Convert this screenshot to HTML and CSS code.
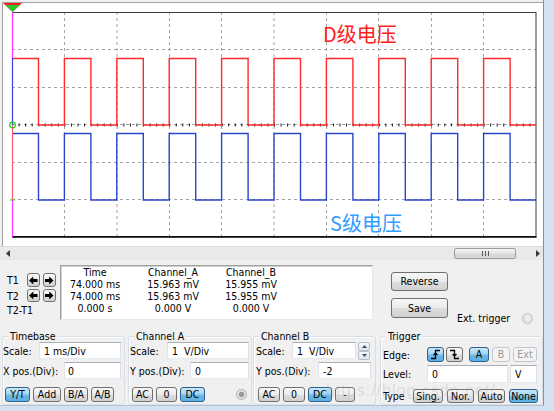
FILE: index.html
```html
<!DOCTYPE html>
<html>
<head>
<meta charset="utf-8">
<link rel="stylesheet" href="styles.css">
</head>
<body>
<div class="app">
  <div class="screen">
    <svg class="plot" width="540" height="243" viewBox="3 3 540 243">
      <g class="grid">
        <line x1="64.5" y1="12" x2="64.5" y2="237"/>
        <line x1="117" y1="12" x2="117" y2="237"/>
        <line x1="169.5" y1="12" x2="169.5" y2="237"/>
        <line x1="221.5" y1="12" x2="221.5" y2="237"/>
        <line x1="274" y1="12" x2="274" y2="237"/>
        <line x1="326.5" y1="12" x2="326.5" y2="237"/>
        <line x1="378.5" y1="12" x2="378.5" y2="237"/>
        <line x1="431.5" y1="12" x2="431.5" y2="237"/>
        <line x1="483.5" y1="12" x2="483.5" y2="237"/>
        <line x1="12" y1="49.5" x2="536" y2="49.5"/>
        <line x1="12" y1="87.5" x2="536" y2="87.5"/>
        <line x1="12" y1="124.5" x2="536" y2="124.5"/>
        <line x1="12" y1="162.5" x2="536" y2="162.5"/>
        <line x1="12" y1="199.5" x2="536" y2="199.5"/>
      </g>
      <line class="ticks" x1="12" y1="125" x2="536" y2="125"/>
      <rect class="frame" x="12.5" y="12.5" width="523.5" height="224"/>
      <line class="bottom" x1="12" y1="237" x2="536.5" y2="237"/>
      <path class="wave-a" d="M12.5 58.5H38.5V125H64.4V58.5H90.9V125H116.8V58.5H143.3V125H169.2V58.5H195.7V125H221.6V58.5H248.1V125H274V58.5H300.5V125H326.4V58.5H352.9V125H378.8V58.5H405.3V125H431.2V58.5H457.7V125H483.6V58.5H510.1V125H536"/>
      <path class="wave-b" d="M12.5 133.5H38.5V200H64.4V133.5H90.9V200H116.8V133.5H143.3V200H169.2V133.5H195.7V200H221.6V133.5H248.1V200H274V133.5H300.5V200H326.4V133.5H352.9V200H378.8V133.5H405.3V200H431.2V133.5H457.7V200H483.6V133.5H510.1V200H536"/>
      <line class="cur-m" x1="12.5" y1="12" x2="12.5" y2="58"/>
      <line class="cur-b" x1="12.5" y1="58" x2="12.5" y2="125"/>
      <line class="cur-r" x1="12.5" y1="125" x2="12.5" y2="200"/>
      <line class="cur-m" x1="12.5" y1="200" x2="12.5" y2="237"/>
      <circle class="gnd" cx="12.5" cy="125" r="2.8"/>
      <line class="gnd-b" x1="10" y1="200" x2="15" y2="200"/>
      <polygon class="mk-r" points="3,3 22,3 12.5,12"/>
      <polygon class="mk-g" points="5.5,5 19.5,5 12.5,12"/>
      <text class="lbl-d" x="323" y="42">D级电压</text>
      <text class="lbl-s" x="330" y="231">S级电压</text>
    </svg>
  </div>

  <div class="hscroll">
    <svg class="sarrow" width="4" height="7" viewBox="0 0 4 7"><polygon points="0,3.5 4,0 4,7"/></svg>
    <div class="thumb">
      <svg width="7" height="5" viewBox="0 0 7 5"><path d="M0.5 0V5M3.5 0V5M6.5 0V5"/></svg>
    </div>
    <svg class="sarrow" width="4" height="7" viewBox="0 0 4 7"><polygon points="0,0 4,3.5 0,7"/></svg>
  </div>

  <div class="readout">
    <div class="cursors">
      <span class="tl">T1</span>
      <span class="ab"><svg width="9" height="9" viewBox="0 0 9 9"><polygon points="0,4.5 4.3,0.5 4.3,3 8.5,3 8.5,6 4.3,6 4.3,8.5"/></svg></span>
      <span class="ab"><svg width="9" height="9" viewBox="0 0 9 9"><polygon points="8.5,4.5 4.2,0.5 4.2,3 0,3 0,6 4.2,6 4.2,8.5"/></svg></span>
      <span class="tl">T2</span>
      <span class="ab"><svg width="9" height="9" viewBox="0 0 9 9"><polygon points="0,4.5 4.3,0.5 4.3,3 8.5,3 8.5,6 4.3,6 4.3,8.5"/></svg></span>
      <span class="ab"><svg width="9" height="9" viewBox="0 0 9 9"><polygon points="8.5,4.5 4.2,0.5 4.2,3 0,3 0,6 4.2,6 4.2,8.5"/></svg></span>
      <span class="tl t21">T2-T1</span>
    </div>
    <div class="data">
      <div class="dgrid">
        <span>Time</span><span>Channel_A</span><span>Channel_B</span>
        <span>74.000 ms</span><span>15.963 mV</span><span>15.955 mV</span>
        <span>74.000 ms</span><span>15.963 mV</span><span>15.955 mV</span>
        <span>0.000 s</span><span>0.000 V</span><span>0.000 V</span>
      </div>
    </div>
    <div class="actions">
      <span class="btn big">Reverse</span>
      <span class="btn big save">Save</span>
    </div>
    <div class="ext">
      <span class="ext-text">Ext. trigger</span>
      <span class="radio"></span>
    </div>
  </div>

  <div class="controls">
    <div class="group g-time">
      <div class="legend">Timebase</div>
      <div class="row">
        <span>Scale:</span><span class="inp w82">1 ms/Div</span>
      </div>
      <div class="row r2">
        <span>X pos.(Div):</span><span class="inp w57">0</span>
      </div>
      <div class="btns">
        <span class="btn on w25">Y/T</span>
        <span class="btn w28">Add</span>
        <span class="btn w24">B/A</span>
        <span class="btn w23">A/B</span>
      </div>
    </div>

    <div class="group g-a">
      <div class="legend">Channel A</div>
      <div class="row">
        <span>Scale:</span><span class="inp w82">1&nbsp; V/Div</span>
      </div>
      <div class="row r2">
        <span>Y pos.(Div):</span><span class="inp w59">0</span>
      </div>
      <div class="btns">
        <span class="btn w21">AC</span>
        <span class="btn w21">0</span>
        <span class="btn on w25">DC</span>
        <span class="radio dot"></span>
      </div>
    </div>

    <div class="group g-b">
      <div class="legend">Channel B</div>
      <div class="row">
        <span>Scale:</span>
        <span class="combo">
          <span class="inp w64">1&nbsp; V/Div</span>
          <span class="spin">
            <span class="sp"><svg width="5" height="3" viewBox="0 0 5 3"><polygon points="0,3 2.5,0 5,3"/></svg></span>
            <span class="sp"><svg width="5" height="3" viewBox="0 0 5 3"><polygon points="0,0 2.5,3 5,0"/></svg></span>
          </span>
        </span>
      </div>
      <div class="row r2 rb2">
        <span>Y pos.(Div):</span><span class="inp w53">-2</span>
      </div>
      <div class="btns">
        <span class="btn w22">AC</span>
        <span class="btn w22">0</span>
        <span class="btn on w24">DC</span>
        <span class="btn w20">-</span>
      </div>
    </div>

    <div class="group g-trig">
      <div class="legend">Trigger</div>
      <div class="trow edge">
        <span class="tlab">Edge:</span>
        <span class="btn on w17"><svg width="11" height="11" viewBox="0 0 11 11"><path d="M1 9.5H5.5V1.5H10M3.5 6L5.5 4L7.5 6"/></svg></span>
        <span class="btn w17 ml2"><svg width="11" height="11" viewBox="0 0 11 11"><path d="M1 1.5H5.5V9.5H10M3.5 5L5.5 7L7.5 5"/></svg></span>
        <span class="btn on w20 ml6">A</span>
        <span class="btn off w18 ml3">B</span>
        <span class="btn off w24 ml3">Ext</span>
      </div>
      <div class="trow level">
        <span class="tlab">Level:</span>
        <span class="inp w81">0</span>
        <span class="inp unit">V</span>
      </div>
      <div class="trow type">
        <span class="tlab t30">Type</span>
        <span class="btn w30">Sing.</span>
        <span class="btn w27 ml4">Nor.</span>
        <span class="btn w27 ml4">Auto</span>
        <span class="btn on w29 ml4">None</span>
      </div>
    </div>
  </div>
  <div class="watermark">https://blog.csdn.net/</div>
</div>
</body>
</html>
```

FILE: styles.css
```css
* { box-sizing: border-box; }

body {
  margin: 0;
  width: 554px;
  height: 411px;
  overflow: hidden;
  background: #d3e1f1;
  font-family: "DejaVu Sans Condensed", "Liberation Sans", sans-serif;
  font-size: 10.5px;
  color: #000;
}

.app {
  position: relative;
  width: 544px;
  height: 406px;
  padding-top: 2px;
  background: #f0f0f0;
  border-right: 1px solid #8e8f8f;
  border-bottom: 1px solid #b7c3cf;
}

/* ---------- scope screen ---------- */
.screen {
  width: 541px;
  height: 244px;
  margin-left: 2px;
  background: #fff;
  border-left: 1px solid #a0a0a0;
  border-top: 1px solid #a0a0a0;
}

.plot { display: block; }

.grid line {
  stroke: #a4a4a4;
  stroke-width: 1;
  stroke-dasharray: 3 3;
}

.ticks {
  stroke: #1a1a1a;
  stroke-width: 3;
  stroke-dasharray: 1 5.55;
}

.frame { fill: none; stroke: #3c3c3c; stroke-width: 1; }
.bottom { stroke: #000; stroke-width: 1.5; }

.wave-a { fill: none; stroke: #ff2a2a; stroke-width: 1.4; }
.wave-b { fill: none; stroke: #2a46c8; stroke-width: 1.4; }

.cur-m { stroke: #ff33ff; stroke-width: 1.2; }
.cur-b { stroke: #3344dd; stroke-width: 1.2; }
.cur-r { stroke: #ff5a6a; stroke-width: 1.2; }

.gnd { fill: none; stroke: #22cc22; stroke-width: 1.2; }
.gnd-b { stroke: #22cc22; stroke-width: 1; }

.mk-r { fill: #ee2020; }
.mk-g { fill: #28c828; }

.lbl-d, .lbl-s {
  font-family: "Noto Sans CJK SC", "Noto Sans", sans-serif;
  font-size: 20px;
}
.lbl-d { fill: #ff2020; }
.lbl-s { fill: #2f9cff; }

/* ---------- horizontal scrollbar ---------- */
.hscroll {
  display: flex;
  align-items: center;
  height: 14px;
  padding: 0 3px 0 6px;
  background: #e9e9e9;
  border-top: 1px solid #dadada;
}

.sarrow polygon { fill: #3a3a3a; }

.thumb {
  display: flex;
  align-items: center;
  justify-content: center;
  width: 62px;
  height: 11px;
  margin-left: auto;
  margin-right: 20px;
  border: 1px solid #9c9c9c;
  border-radius: 2px;
  background: linear-gradient(#f6f6f6, #e4e4e4 50%, #d6d6d6 51%, #dadada);
}
.thumb path { stroke: #555; stroke-width: 1; }

/* ---------- readout row ---------- */
.readout {
  display: flex;
  height: 65px;
  padding-left: 7px;
}

.cursors {
  flex: none;
  display: grid;
  grid-template-columns: 17px 13px 13px;
  grid-template-rows: 14px 13px 12px;
  column-gap: 3px;
  row-gap: 2px;
  align-content: start;
  margin-top: 13px;
}

.tl {
  line-height: 12px;
  align-self: center;
}
.t21 { grid-column: 1 / 4; align-self: end; }

.ab {
  display: flex;
  align-items: center;
  justify-content: center;
  border: 1px solid #707070;
  border-radius: 3px;
  background: linear-gradient(#f7f7f7, #e9e9e9 50%, #dcdcdc 51%, #d4d4d4);
}
.ab polygon { fill: #000; }

.data {
  flex: none;
  width: 313px;
  height: 55px;
  margin: 5px 0 0 4px;
  background: #fff;
  border: 1px solid;
  border-color: #a0a0a0 #e8e8e8 #e8e8e8 #a0a0a0;
  box-shadow: inset 1px 1px 0 #d0d0d0;
}

.dgrid {
  display: grid;
  grid-template-columns: 68px 88px 68px;
  line-height: 12px;
  text-align: center;
  white-space: nowrap;
}

.actions {
  flex: none;
  display: flex;
  flex-direction: column;
  gap: 7px;
  margin: 12px 0 0 18px;
}

.btn {
  display: flex;
  align-items: center;
  justify-content: center;
  height: 15px;
  border: 1px solid #707070;
  border-radius: 3px;
  background: linear-gradient(#f6f6f6, #ebebeb 50%, #dddddd 51%, #d1d1d1);
  line-height: 1;
  white-space: nowrap;
}
.btn path { fill: none; stroke: #000; stroke-width: 1.3; }

.btn.big { width: 57px; height: 19px; }
.btn.save { height: 20px; }

.btn.on {
  border-color: #2c628b;
  background: linear-gradient(#c7e6f8, #a5d6f3 45%, #6db9e8 55%, #5eafe3);
}

.btn.off {
  border-color: #c4c8cc;
  background: #f4f4f4;
  color: #9a9a9a;
}

.ext {
  flex: none;
  display: flex;
  align-items: center;
  height: 12px;
  margin: 52px 0 0 9px;
}

.ext-text {
  width: 65px;
  white-space: nowrap;
  line-height: 12px;
}

.radio {
  flex: none;
  width: 11px;
  height: 11px;
  border-radius: 50%;
  border: 1px solid #c2c2c2;
  background: radial-gradient(circle at 50% 45%, #f2f2f2, #d9d9d9);
}
.radio.dot {
  margin-left: 28px;
  align-self: center;
  border-color: #b0b0b0;
  background: radial-gradient(circle, #9a9a9a 0 2.5px, #e8e8e8 3.2px, #d6d6d6);
}

/* ---------- control groups ---------- */
.controls {
  display: flex;
  height: 80px;
  padding: 11px 0 0 2px;
}

.group {
  flex: none;
  display: flex;
  flex-direction: column;
  height: 69px;
  border: 1px solid #d5dfe5;
  border-radius: 3px;
  box-shadow: inset 1px 1px 0 #fff;
}

.g-time { width: 123px; margin-right: 3px; }
.g-a { width: 124px; margin-right: 1px; }
.g-b { width: 123px; margin-right: 4px; }
.g-trig { width: 163px; }

.legend {
  align-self: flex-start;
  height: 12px;
  margin: -7px 0 0 5px;
  padding: 0 2px;
  line-height: 12px;
  background: #f0f0f0;
}

.row {
  display: flex;
  align-items: center;
  justify-content: space-between;
  height: 17px;
  white-space: nowrap;
}
.r2 { margin-top: 3px; }

.g-time .row { padding: 0 3px 0 0; }
.g-a .row { padding: 0 2px 0 1px; }
.g-b .row { padding: 0 5px 0 2px; }
.g-b .rb2 { padding-right: 4px; }

.inp {
  display: flex;
  align-items: center;
  height: 17px;
  padding-left: 4px;
  background: #fff;
  border: 1px solid;
  border-color: #abadb3 #dbdfe6 #e3e9ef #e2e3ea;
  white-space: nowrap;
}

.w82 { width: 82px; }
.w57 { width: 57px; padding-left: 3px; }
.w59 { width: 59px; }
.w64 { width: 64px; }
.w53 { width: 53px; }
.w81 { width: 81px; }

.combo { display: flex; align-items: center; gap: 2px; }

.spin {
  display: flex;
  flex-direction: column;
  width: 12px;
  height: 18px;
}
.sp {
  flex: 1;
  display: flex;
  align-items: center;
  justify-content: center;
  border: 1px solid #b7c0c9;
  border-radius: 2px;
  background: linear-gradient(#f4f8fb, #dbe6ef);
}
.sp polygon { fill: #3b4a5a; }

.btns {
  display: flex;
  align-items: center;
  gap: 3px;
  margin-top: 8px;
}
.g-time .btns { padding-left: 2px; }
.g-a .btns { padding-left: 3px; }
.g-b .btns { padding-left: 4px; }

.w17 { width: 17px; }
.w18 { width: 18px; }
.w20 { width: 20px; }
.w21 { width: 21px; }
.w22 { width: 22px; }
.w23 { width: 23px; }
.w24 { width: 24px; }
.w25 { width: 25px; }
.w27 { width: 27px; }
.w28 { width: 28px; }
.w29 { width: 29px; }
.w30 { width: 30px; }

.ml2 { margin-left: 2px; }
.ml3 { margin-left: 3px; }
.ml4 { margin-left: 4px; }
.ml6 { margin-left: 6px; }

.trow {
  display: flex;
  align-items: center;
  padding-left: 2px;
}
.edge { height: 15px; margin-top: 5px; }
.level { height: 18px; margin-top: 3px; }
.level .inp { height: 18px; }
.type { height: 14px; margin-top: 6px; }
.type .btn { height: 14px; }

.tlab { width: 44px; }
.tlab.t30 { width: 30px; }

.unit { width: 27px; margin-left: 2px; }

.watermark {
  position: absolute;
  left: 326px;
  top: 382px;
  font-family: "Liberation Sans", sans-serif;
  font-size: 16px;
  letter-spacing: 1px;
  color: rgba(170, 170, 170, 0.3);
  pointer-events: none;
  white-space: nowrap;
}
```
